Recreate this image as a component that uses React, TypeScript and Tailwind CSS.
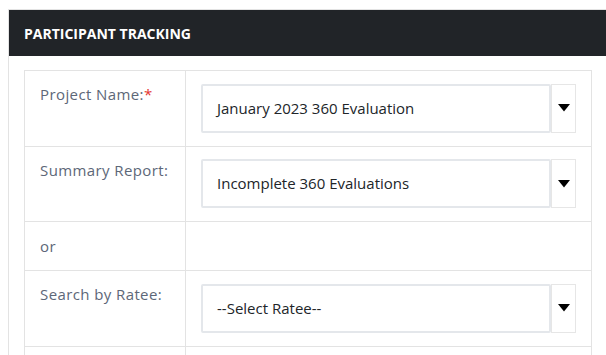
const rows = [
  { label: "Project Name:", required: true, value: "January 2023 360 Evaluation" },
  { label: "Summary Report:", value: "Incomplete 360 Evaluations" },
  { label: "or", plain: true },
  { label: "Search by Ratee:", value: "--Select Ratee--" },
];

function SelectBox({ value }: { value: string }) {
  return (
    <div className="flex h-[49px]">
      <div className="flex w-[350px] items-center rounded-[2px] border-2 border-[#e4e7eb] bg-white pl-[14px] font-['Open_Sans',sans-serif] text-[15px] text-[#212529]">
        {value}
      </div>
      <div className="flex w-[25px] items-center justify-center border border-[#e6e6e6] bg-white">
        <svg width="12" height="8" viewBox="0 0 12 8">
          <path d="M0 0h12L6 7.5z" fill="#000" />
        </svg>
      </div>
    </div>
  );
}

export default function App() {
  return (
    <div className="h-[355px] overflow-hidden bg-white pl-[8px] pt-[9px]">
      <div className="border-l border-t border-[#e3e3e3]">
        <div className="flex h-[46px] items-center bg-[#212428] pl-[15px] pt-[1px] font-['Open_Sans',sans-serif] text-[14px] font-bold text-white">
          PARTICIPANT TRACKING
        </div>
        <div className="pl-[15px] pt-[14px]">
          <div className="w-[568px] border-l border-r border-t border-[#e3e3e3]">
            {rows.map((r) => (
              <div key={r.label} className="flex border-b border-[#e3e3e3]">
                <div
                  className={`w-[161px] shrink-0 border-r border-[#e3e3e3] pl-[15px] font-['Open_Sans',sans-serif] text-[15px] tracking-[0.4px] text-[#5d6778] ${
                    r.plain ? "flex h-[48px] items-center" : "pt-[12px]"
                  }`}
                >
                  {r.label}
                  {r.required && <span className="text-[#e3342f]">*</span>}
                </div>
                <div className="flex-1 pl-[15px]">
                  {r.value && (
                    <div className="pb-[13px] pt-[12.5px]">
                      <SelectBox value={r.value} />
                    </div>
                  )}
                </div>
              </div>
            ))}
            <div className="flex h-[30px]">
              <div className="w-[161px] border-r border-[#e3e3e3]" />
            </div>
          </div>
        </div>
      </div>
    </div>
  );
}
